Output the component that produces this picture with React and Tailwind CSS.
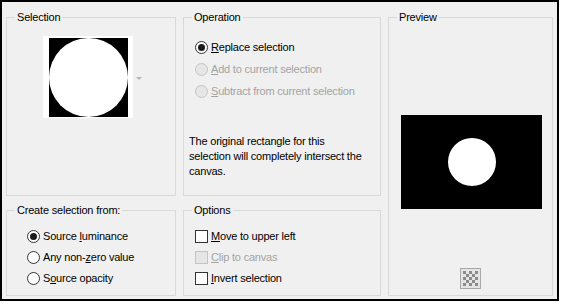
const font = { fontFamily: '"Liberation Sans", Arial, sans-serif' };

function Radio({ checked, disabled }) {
  return (
    <span
      className={`w-[13px] h-[13px] rounded-full border flex items-center justify-center shrink-0 ${
        disabled ? 'border-[#c4c4c4] bg-[#e6e6e6]' : 'border-[#333] bg-white'
      }`}
    >
      {checked && <span className="w-[7px] h-[7px] rounded-full bg-[#1a1a1a]" />}
    </span>
  );
}

function Check({ disabled }) {
  return (
    <span
      className={`w-[13px] h-[13px] border shrink-0 ${
        disabled ? 'border-[#c4c4c4] bg-[#e6e6e6]' : 'border-[#333] bg-white'
      }`}
    />
  );
}

function Row({ control, disabled, children }) {
  return (
    <div className="flex items-center gap-[3px] h-[22px]">
      {control}
      <span className={disabled ? 'text-[#a3a3a3]' : 'text-black'}>{children}</span>
    </div>
  );
}

function Group({ title, className = '', children }) {
  return (
    <fieldset className={`border border-[#d9d9d9] min-w-0 ${className}`}>
      <legend className="ml-[8px] px-[2px] leading-[13px] text-black">{title}</legend>
      {children}
    </fieldset>
  );
}

function Checker() {
  const cells = [];
  for (let r = 0; r < 5; r++)
    for (let c = 0; c < 5; c++)
      if ((r + c) % 2 === 0) cells.push(<rect key={`${r}-${c}`} x={3 + c * 3} y={3 + r * 3} width="3" height="3" fill="#8c8c8c" />);
  return (
    <svg width="21" height="21" viewBox="0 0 21 21">
      <rect x="0.5" y="0.5" width="20" height="20" fill="#e4e4e4" stroke="#a8a8a8" />
      {cells}
    </svg>
  );
}

export default function App() {
  return (
    <div className="w-[563px] h-[305px] bg-white text-[11px] tracking-[-0.2px]" style={font}>
      <div className="w-[559px] h-[301px] border-2 border-black bg-[#f0f0f0] pt-[9px] pl-[4px]">
        <div className="grid grid-cols-[170px_198px_165px] grid-rows-[185px_92px] gap-x-[7px] gap-y-[8px]">
          {/* Selection */}
          <Group title="Selection">
            <div className="flex items-center mt-[12px] ml-[36px]">
              <div className="w-[90px] h-[82px] bg-white pt-[2px] pl-[6px]">
                <div className="w-[79px] h-[79px] bg-black flex items-center justify-center">
                  <div className="w-[79px] h-[79px] rounded-full bg-white" />
                </div>
              </div>
              <svg width="6" height="4" viewBox="0 0 6 4" className="ml-[3px] mt-[4px]">
                <path d="M0 0h6L3 3z" fill="#b4b4b4" />
              </svg>
            </div>
          </Group>

          {/* Operation */}
          <Group title="Operation">
            <div className="pl-[11px] mt-[12px]">
              <Row control={<Radio checked />}><u>R</u>eplace selection</Row>
              <Row control={<Radio disabled />} disabled><u>A</u>dd to current selection</Row>
              <Row control={<Radio disabled />} disabled><u>S</u>ubtract from current selection</Row>
            </div>
            <p className="pl-[5px] mt-[32px] leading-[15px] text-black w-[180px]">
              The original rectangle for this selection will completely intersect the canvas.
            </p>
          </Group>

          {/* Preview */}
          <Group title="Preview" className="row-span-2">
            <div className="flex flex-col items-center">
              <div className="mt-[91px] w-[141px] h-[94px] bg-black flex items-center justify-center ml-[2px]">
                <div className="w-[48px] h-[48px] rounded-full bg-white" />
              </div>
              <div className="mt-[59px]">
                <Checker />
              </div>
            </div>
          </Group>

          {/* Create selection from */}
          <Group title="Create selection from:">
            <div className="pl-[20px] mt-[9px] [&>div]:h-[21px]">
              <Row control={<Radio checked />}>Source <u>l</u>uminance</Row>
              <Row control={<Radio />}>Any non-<u>z</u>ero value</Row>
              <Row control={<Radio />}>S<u>o</u>urce opacity</Row>
            </div>
          </Group>

          {/* Options */}
          <Group title="Options">
            <div className="pl-[11px] mt-[9px] [&>div]:h-[21px]">
              <Row control={<Check />}><u>M</u>ove to upper left</Row>
              <Row control={<Check disabled />} disabled><u>C</u>lip to canvas</Row>
              <Row control={<Check />}><u>I</u>nvert selection</Row>
            </div>
          </Group>
        </div>
      </div>
    </div>
  );
}
